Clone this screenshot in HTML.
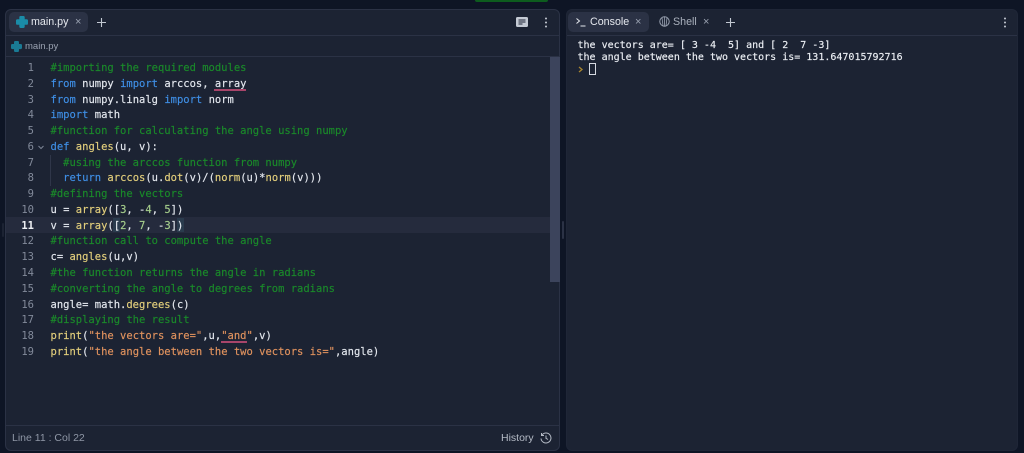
<!DOCTYPE html>
<html><head><meta charset="utf-8"><style>
*{box-sizing:border-box}
html,body{margin:0;padding:0;width:1024px;height:453px;overflow:hidden;background:#0e1525;position:relative}
div,span.a,svg.a{position:absolute}
.ui{font-family:"Liberation Sans",sans-serif;white-space:pre}
.line{position:absolute;left:50.5px;margin-top:1.5px;height:15.77px;font:10.5px/15.77px "DejaVu Sans Mono",monospace;color:#e4e8ef;white-space:pre;-webkit-text-stroke:.15px currentColor}
.n{position:absolute;width:34px;left:0;margin-top:1.5px;text-align:right;font:10.5px/15.77px "DejaVu Sans Mono",monospace;color:#828a9a}
.c{color:#1a8a2a}.k{color:#3f8fe6}.f{color:#e3cf7c}.s{color:#e0925e}.m{color:#a6cf8c}
.w{height:2px;background:#a8456a}
.t{position:absolute;left:577.5px;font:10px/12px "DejaVu Sans Mono",monospace;color:#eceff4;white-space:pre;-webkit-text-stroke:.15px currentColor}
</style></head><body>
<div style="left:475px;top:0;width:73px;height:2px;background:#0d5c1e;border-radius:0 0 5px 5px"></div>

<!-- left panel -->
<div style="left:5px;top:9px;width:555px;height:442px;background:#1c2333;border:1px solid #2b3245;border-radius:6px"></div>
<div style="left:6px;top:35px;width:553px;height:1px;background:#2b3245"></div>
<div style="left:6px;top:56px;width:553px;height:1px;background:#2b3245"></div>
<div style="left:6px;top:425px;width:553px;height:1px;background:#2b3245"></div>
<div style="left:9px;top:12px;width:79px;height:20px;background:#2b3245;border-radius:5px"></div>
<svg class="a" style="left:16px;top:16px" width="12" height="12" viewBox="0 0 12 12"><path d="M4.500 0h3A1.200 1.200 0 0 1 8.700 1.200V3.300h2A1.300 1.300 0 0 1 12 4.600v2.900a1.300 1.300 0 0 1-1.300 1.300H8.700v2A1.200 1.200 0 0 1 7.500 12h-3A1.200 1.200 0 0 1 3.300 10.800V8.800h-2A1.300 1.300 0 0 1 0 7.500V4.600A1.300 1.300 0 0 1 1.300 3.300h2V1.200A1.200 1.200 0 0 1 4.500 0z" fill="#1a8ca8"/></svg>
<div class="ui" style="left:31px;top:15px;font-size:10.700px;line-height:14px;color:#e6e9ef">main.py</div>
<div class="ui" style="left:75px;top:15px;font-size:11px;line-height:14px;color:#9aa2b1">×</div>
<svg class="a" style="left:96px;top:17px" width="11" height="11" viewBox="0 0 11 11"><path d="M5.500 1v9M1 5.500h9" stroke="#c2c8d2" stroke-width="1.100"/></svg>
<svg class="a" style="left:11px;top:41px" width="11" height="11" viewBox="0 0 12 12"><path d="M4.500 0h3A1.200 1.200 0 0 1 8.700 1.200V3.300h2A1.300 1.300 0 0 1 12 4.600v2.900a1.300 1.300 0 0 1-1.300 1.300H8.700v2A1.200 1.200 0 0 1 7.500 12h-3A1.200 1.200 0 0 1 3.300 10.800V8.800h-2A1.300 1.300 0 0 1 0 7.500V4.600A1.300 1.300 0 0 1 1.300 3.300h2V1.200A1.200 1.200 0 0 1 4.500 0z" fill="#1a7a94"/></svg>
<div class="ui" style="left:25px;top:40px;font-size:9.500px;line-height:13px;color:#9aa2b1">main.py</div>
<svg class="a" style="left:516px;top:17px" width="12" height="10" viewBox="0 0 12 10"><rect width="12" height="10" rx="1.500" fill="#c4cad4"/><path d="M2.500 3h7M2.500 5h7M2.500 7h4" stroke="#1c2333" stroke-width="1"/></svg>
<svg class="a" style="left:544px;top:17px" width="4" height="11" viewBox="0 0 4 11"><circle cx="2" cy="1.500" r="1" fill="#c4cad4"/><circle cx="2" cy="5.500" r="1" fill="#c4cad4"/><circle cx="2" cy="9.500" r="1" fill="#c4cad4"/></svg>

<!-- active line -->
<div style="left:6px;top:217px;width:544px;height:16px;background:#252b3d"></div>
<div style="left:550px;top:57px;width:10px;height:225px;background:#3c445c"></div>
<!-- indent guide -->
<div style="left:50px;top:155px;width:1px;height:31px;background:#2f3649"></div>
<!-- bracket highlight -->
<div style="left:113px;top:218px;width:7px;height:14px;background:#2a3b4d"></div>
<div style="left:177px;top:218px;width:7px;height:14px;background:#2a3b4d"></div>

<!-- line numbers -->
<div class="n" style="top:59.500px">1</div>
<div class="n" style="top:75.270px">2</div>
<div class="n" style="top:91.040px">3</div>
<div class="n" style="top:106.810px">4</div>
<div class="n" style="top:122.580px">5</div>
<div class="n" style="top:138.350px">6</div>
<div class="n" style="top:154.120px">7</div>
<div class="n" style="top:169.890px">8</div>
<div class="n" style="top:185.660px">9</div>
<div class="n" style="top:201.430px">10</div>
<div class="n" style="top:217.200px;color:#f0f2f5;font-weight:bold">11</div>
<div class="n" style="top:232.970px">12</div>
<div class="n" style="top:248.740px">13</div>
<div class="n" style="top:264.510px">14</div>
<div class="n" style="top:280.280px">15</div>
<div class="n" style="top:296.050px">16</div>
<div class="n" style="top:311.820px">17</div>
<div class="n" style="top:327.590px">18</div>
<div class="n" style="top:343.360px">19</div>
<svg class="a" style="left:38px;top:145px" width="6" height="5" viewBox="0 0 6 5"><path d="M.5 1l2.500 2.500L5.500 1" fill="none" stroke="#7d8596" stroke-width="1"/></svg>

<!-- code -->
<div class="line c" style="top:59.500px">#importing the required modules</div>
<div class="line" style="top:75.270px"><span class="k">from</span> numpy <span class="k">import</span> arccos, array</div>
<div class="line" style="top:91.040px"><span class="k">from</span> numpy.linalg <span class="k">import</span> norm</div>
<div class="line" style="top:106.810px"><span class="k">import</span> math</div>
<div class="line c" style="top:122.580px">#function for calculating the angle using numpy</div>
<div class="line" style="top:138.350px"><span class="k">def</span> <span class="f">angles</span>(u, v):</div>
<div class="line c" style="top:154.120px">  #using the arccos function from numpy</div>
<div class="line" style="top:169.890px">  <span class="k">return</span> <span class="f">arccos</span>(u.<span class="f">dot</span>(v)/(<span class="f">norm</span>(u)*<span class="f">norm</span>(v)))</div>
<div class="line c" style="top:185.660px">#defining the vectors</div>
<div class="line" style="top:201.430px">u = <span class="f">array</span>([<span class="m">3</span>, -<span class="m">4</span>, <span class="m">5</span>])</div>
<div class="line" style="top:217.200px">v = <span class="f">array</span>([<span class="m">2</span>, <span class="m">7</span>, -<span class="m">3</span>])</div>
<div class="line c" style="top:232.970px">#function call to compute the angle</div>
<div class="line" style="top:248.740px">c= <span class="f">angles</span>(u,v)</div>
<div class="line c" style="top:264.510px">#the function returns the angle in radians</div>
<div class="line c" style="top:280.280px">#converting the angle to degrees from radians</div>
<div class="line" style="top:296.050px">angle= math.<span class="f">degrees</span>(c)</div>
<div class="line c" style="top:311.820px">#displaying the result</div>
<div class="line" style="top:327.590px"><span class="f">print</span>(<span class="s">"the vectors are="</span>,u,<span class="s">"and"</span>,v)</div>
<div class="line" style="top:343.360px"><span class="f">print</span>(<span class="s">"the angle between the two vectors is="</span>,angle)</div>
<div class="w" style="left:214px;top:88.500px;width:32px"></div>
<div class="w" style="left:221px;top:340.500px;width:26px"></div>

<div class="ui" style="left:12px;top:432px;font-size:10.500px;line-height:13px;color:#8f97a6">Line 11 : Col 22</div>
<div class="ui" style="left:501px;top:431px;font-size:10.500px;line-height:14px;color:#b5bbc6">History</div>
<svg class="a" style="left:540px;top:432px" width="12" height="12" viewBox="0 0 12 12"><path d="M1.800 3.200A5 5 0 1 1 1 6.500M1.500 1v2.500H4M6 3.500V6.300l2 1.200" fill="none" stroke="#b5bbc6" stroke-width="1"/></svg>

<!-- resize handles -->
<div style="left:562px;top:221px;width:2px;height:18px;background:#2b3245;border-radius:1px"></div>
<div style="left:2px;top:223px;width:2px;height:14px;background:#1c2333;border-radius:1px"></div>

<!-- right panel -->
<div style="left:566px;top:9px;width:452px;height:442px;background:#1c2333;border:1px solid #1f2637;border-radius:6px"></div>
<div style="left:567px;top:35px;width:450px;height:1px;background:#2b3245"></div>
<div style="left:568px;top:12px;width:81px;height:20px;background:#2b3245;border-radius:5px"></div>
<svg class="a" style="left:576px;top:17px" width="10" height="10" viewBox="0 0 10 10"><path d="M.5 1.500L3.500 4 .5 6.500M4.500 9H9.500" fill="none" stroke="#e6e9ef" stroke-width="1"/></svg>
<div class="ui" style="left:590px;top:15px;font-size:10.700px;line-height:14px;color:#e6e9ef">Console</div>
<div class="ui" style="left:635px;top:15px;font-size:11px;line-height:14px;color:#9aa2b1">×</div>
<svg class="a" style="left:659px;top:16px" width="11" height="11" viewBox="0 0 11 11"><circle cx="5.500" cy="5.500" r="4.700" fill="none" stroke="#9aa2b1" stroke-width="1"/><path d="M5.500 1v9M3 1.800L4 9.800M8 1.800L7 9.800" stroke="#9aa2b1" stroke-width=".8"/></svg>
<div class="ui" style="left:673px;top:15px;font-size:10.700px;line-height:14px;color:#aab1bd">Shell</div>
<div class="ui" style="left:703px;top:15px;font-size:11px;line-height:14px;color:#9aa2b1">×</div>
<svg class="a" style="left:725px;top:17px" width="11" height="11" viewBox="0 0 11 11"><path d="M5.500 1v9M1 5.500h9" stroke="#c2c8d2" stroke-width="1.100"/></svg>
<svg class="a" style="left:1003px;top:17px" width="4" height="11" viewBox="0 0 4 11"><circle cx="2" cy="1.500" r="1" fill="#c4cad4"/><circle cx="2" cy="5.500" r="1" fill="#c4cad4"/><circle cx="2" cy="9.500" r="1" fill="#c4cad4"/></svg>

<div class="t" style="top:40px">the vectors are= [ 3 -4  5] and [ 2  7 -3]</div>
<div class="t" style="top:52px">the angle between the two vectors is= 131.647015792716</div>
<svg class="a" style="left:578px;top:66px" width="6" height="7" viewBox="0 0 6 7"><path d="M1 1l3 2.500L1 6" fill="none" stroke="#a8862f" stroke-width="1.300"/></svg>
<div style="left:589px;top:63px;width:7px;height:12px;border:1px solid #d5d9e0"></div>
</body></html>
